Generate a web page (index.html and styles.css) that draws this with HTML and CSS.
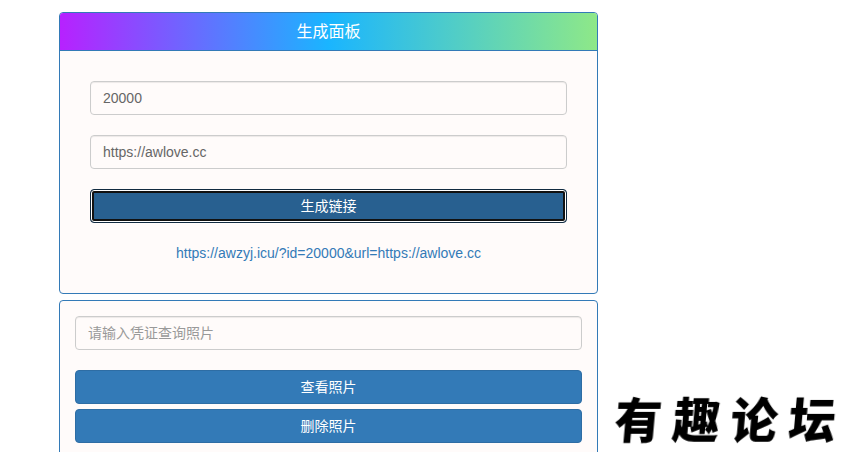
FILE: index.html
```html
<!DOCTYPE html>
<html lang="en">
<head>
  <meta charset="UTF-8">
  <meta name="viewport" content="width=device-width, initial-scale=1.0">
  <title>生成面板</title>
  <link rel="stylesheet" href="styles.css">
</head>
<body>
  <div class="container">
    <div class="panel">
      <div class="panel-heading">生成面板</div>
      <div class="panel-body generate-body">
        <input class="form-control" type="text" value="20000">
        <input class="form-control" type="text" value="https://awlove.cc">
        <button class="btn btn-focus">生成链接</button>
        <p class="result-link">https://awzyj.icu/?id=20000&amp;url=https://awlove.cc</p>
      </div>
    </div>

    <div class="panel">
      <div class="panel-body query-body">
        <input class="form-control" type="text" placeholder="请输入凭证查询照片">
        <button class="btn">查看照片</button>
        <button class="btn btn-next">删除照片</button>
      </div>
    </div>
  </div>

  <div class="logo">有趣论坛</div>
</body>
</html>
```

FILE: styles.css
```css
* {
  box-sizing: border-box;
}

body {
  margin: 0;
  background-color: #fff;
  color: #333;
  font-family: "Liberation Sans", "Noto Sans CJK SC", sans-serif;
  font-size: 14px;
  line-height: 20px;
}

.container {
  width: 539px;
  margin-left: 59px;
  padding-top: 12px;
}

.panel {
  margin-bottom: 6px;
  background-color: #fffbfa;
  border: 1px solid #337ab7;
  border-radius: 4px;
  overflow: hidden;
}

.panel-heading {
  height: 38px;
  border-bottom: 1px solid #337ab7;
  background: linear-gradient(to right, #b721ff, #1ab5ff 50%, #8ee888);
  color: #fff;
  font-size: 16px;
  line-height: 37px;
  text-align: center;
}

.panel-body {
  display: flex;
  flex-direction: column;
}

.generate-body {
  height: 242px;
  padding: 30px 30px 0;
}

.query-body {
  padding: 15px;
}

.form-control {
  width: 100%;
  height: 34px;
  margin-bottom: 20px;
  padding: 6px 12px;
  background-color: transparent;
  border: 1px solid #ccc;
  border-radius: 4px;
  box-shadow: inset 0 1px 1px rgba(0, 0, 0, 0.075);
  color: #666;
  font: inherit;
}

.form-control::placeholder {
  color: #999;
}

.btn {
  width: 100%;
  height: 34px;
  padding: 6px 12px;
  background-color: #337ab7;
  border: 1px solid #2e6da4;
  border-radius: 4px;
  color: #fff;
  font: inherit;
}

.btn-next {
  margin-top: 5px;
}

.btn-focus {
  background-color: #286090;
  border-color: #122b40;
  box-shadow: inset 0 0 0 1px #fff, inset 0 0 0 3px #111;
}

.result-link {
  margin: 20px 0 0;
  color: #337ab7;
  text-align: center;
}

.logo {
  position: fixed;
  left: 615px;
  top: 391px;
  color: #000;
  font-family: "Noto Sans CJK SC", sans-serif;
  font-size: 47px;
  font-weight: 900;
  letter-spacing: 11px;
  line-height: 54px;
  white-space: nowrap;
  transform: skewX(-5deg);
}
```
